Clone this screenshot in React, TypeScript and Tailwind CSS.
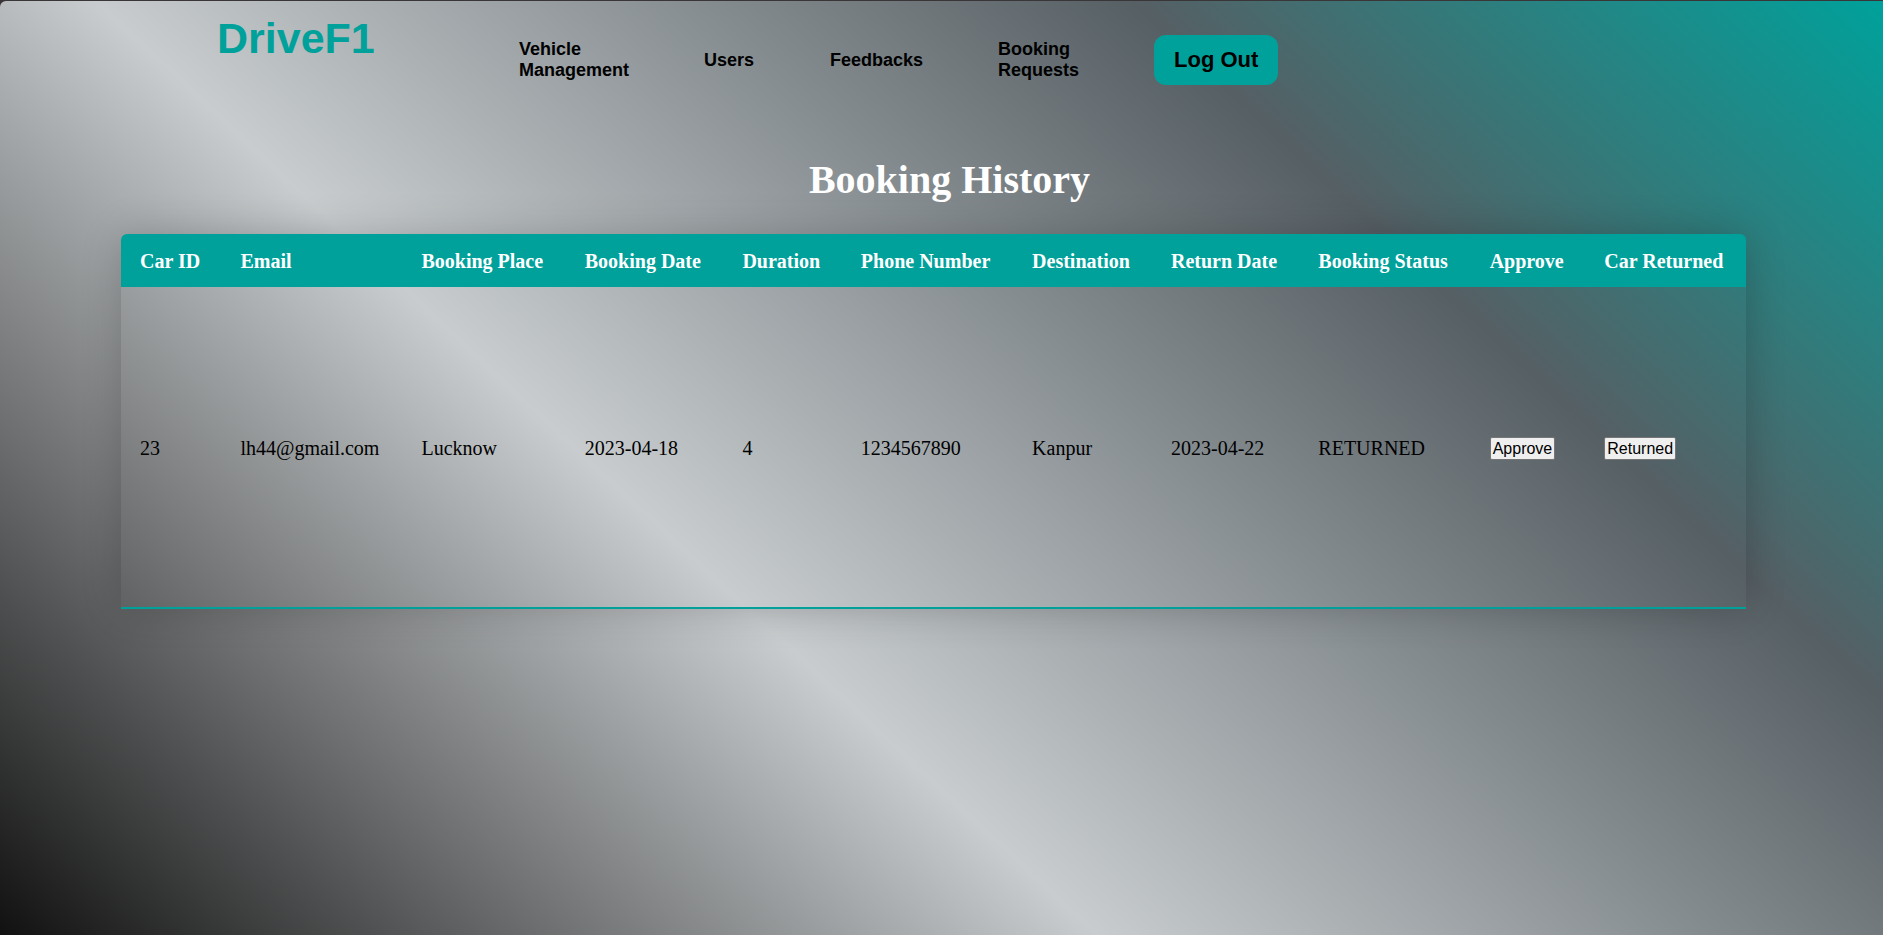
import React from "react";

const links = [
  { label: "Vehicle Management", width: "w-[108px]" },
  { label: "Users", width: "w-[49px]" },
  { label: "Feedbacks", width: "w-[91px]" },
  { label: "Booking Requests", width: "w-[79px]" },
];

const columns = [
  "Car ID",
  "Email",
  "Booking Place",
  "Booking Date",
  "Duration",
  "Phone Number",
  "Destination",
  "Return Date",
  "Booking Status",
  "Approve",
  "Car Returned",
];

const bookings = [
  ["23", "lh44@gmail.com", "Lucknow", "2023-04-18", "4", "1234567890", "Kanpur", "2023-04-22", "RETURNED"],
];

function ActionButton({ children }: { children: React.ReactNode }) {
  return (
    <button
      type="button"
      className="block rounded-[2px] border border-[#767676] bg-[#efefef] px-[2px] font-['Liberation_Sans',Arial,sans-serif] text-[16px] leading-[21px] text-black"
    >
      {children}
    </button>
  );
}

function NavBar() {
  return (
    <header className="flex h-[120px] items-start pl-[217px] font-['Liberation_Sans',Arial,sans-serif] font-bold">
      <a href="#home" className="w-[302px] pt-[12px] text-[43px] leading-[50px] text-[#00a19b]">
        DriveF1
      </a>
      <nav className="flex h-[118px] items-center gap-[77px] text-black">
        {links.map((link) => (
          <a key={link.label} href="#" className={`${link.width} text-[18px] leading-[21px]`}>
            {link.label}
          </a>
        ))}
        <button type="button" className="h-[50px] rounded-[12px] bg-[#00a19b] px-[20px] pb-[2px] text-[22px] whitespace-nowrap">
          Log Out
        </button>
      </nav>
    </header>
  );
}

export default function App() {
  return (
    <div className="min-h-screen bg-[#3a3537] pt-px">
      <div className="min-h-[calc(100vh-1px)] rounded-tl-[6px] bg-[linear-gradient(43deg,#111111_0%,#c8ccce_38%,#565f64_74%,#00a19b_100%)] font-['Liberation_Serif','Times_New_Roman',serif]">
        <NavBar />
        <main className="pr-[137px] pl-[121px]">
          <h1 className="pt-[36px] pb-[31px] pl-[32px] text-center text-[40px] leading-[46px] font-bold text-white">
            Booking History
          </h1>
          <table className="w-full border-separate border-spacing-0 overflow-hidden rounded-t-[6px] text-left text-[20px] leading-[23px] shadow-[0_0_40px_rgba(0,0,0,0.2)]">
            <thead className="bg-[#00a19b] text-white">
              <tr>
                {columns.map((column) => (
                  <th key={column} scope="col" className="px-[19px] pt-[16px] pb-[14px] font-bold whitespace-nowrap">
                    {column}
                  </th>
                ))}
              </tr>
            </thead>
            <tbody className="text-black">
              {bookings.map((booking) => (
                <tr key={booking[0]} className="h-[322px]">
                  {booking.map((value) => (
                    <td key={value} className="border-b-2 border-[#00a19b] px-[19px] pt-[2px] whitespace-nowrap">
                      {value}
                    </td>
                  ))}
                  <td className="border-b-2 border-[#00a19b] px-[19px] pt-[2px]">
                    <ActionButton>Approve</ActionButton>
                  </td>
                  <td className="border-b-2 border-[#00a19b] px-[19px] pt-[2px]">
                    <ActionButton>Returned</ActionButton>
                  </td>
                </tr>
              ))}
            </tbody>
          </table>
        </main>
      </div>
    </div>
  );
}
